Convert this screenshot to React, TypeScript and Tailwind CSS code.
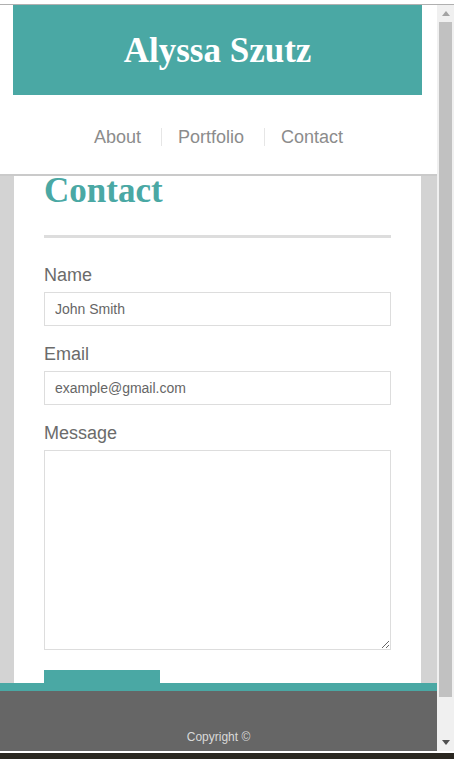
const sans = { fontFamily: '"Liberation Sans", Arial, sans-serif' };

const FIELDS = [
  { label: "Name", placeholder: "John Smith" },
  { label: "Email", placeholder: "example@gmail.com" },
];

const NAV = ["About", "Portfolio", "Contact"];

function Scrollbar() {
  return (
    <div className="flex w-[17px] flex-col bg-[#f0f0f0]">
      <div className="flex h-[17px] items-center justify-center">
        <svg width="8" height="5" viewBox="0 0 8 5">
          <path d="M0 5 L4 0 L8 5 Z" fill="#a3a3a3" />
        </svg>
      </div>
      <div className="mx-[2px] h-[675px] bg-[#c1c1c1]" />
      <div className="flex-1" />
      <div className="flex h-[17px] items-center justify-center">
        <svg width="8" height="5" viewBox="0 0 8 5">
          <path d="M0 0 L8 0 L4 5 Z" fill="#505050" />
        </svg>
      </div>
    </div>
  );
}

export default function App() {
  return (
    <div className="flex h-[759px] w-[454px] flex-col overflow-hidden bg-white" style={sans}>
      <div className="h-[4px] bg-white" />
      <div className="h-px bg-[#b0b0b0]" />

      <div className="flex h-[746px]">
        <div className="flex w-[437px] flex-col">
          {/* header */}
          <header className="h-[171px] border-b-2 border-[#cacaca] bg-white">
            <div className="ml-[13px] flex h-[90px] w-[409px] items-center justify-center bg-[#4aa8a4]">
              <h1
                className="text-[35px] font-bold leading-none text-white"
                style={{ fontFamily: '"Liberation Serif", Georgia, serif' }}
              >
                Alyssa Szutz
              </h1>
            </div>
            <nav className="flex h-[79px] items-start justify-center gap-1 pt-[33px]">
              {NAV.map((item, i) => (
                <a
                  key={item}
                  className={
                    "px-4 text-[18px] leading-[18px] text-[#8c8c8c] " +
                    (i > 0 ? "border-l border-[#e6e6e6]" : "")
                  }
                >
                  {item}
                </a>
              ))}
            </nav>
          </header>

          {/* page body */}
          <main className="flex-1 overflow-hidden bg-[#d3d3d3]">
            <div className="ml-[14px] w-[407px] bg-white px-[30px] pb-10">
              <h2
                className="text-[35px] font-bold leading-[30px] text-[#4aa8a4]"
                style={{ fontFamily: '"Liberation Serif", Georgia, serif' }}
              >
                Contact
              </h2>
              <div className="mt-[29px] h-[3px] bg-[#dddddd]" />

              <form className="mt-[26px] flex flex-col">
                {FIELDS.map((f) => (
                  <div key={f.label} className="mb-[17px] flex flex-col">
                    <label className="text-[18px] leading-[22px] text-[#6b6b6b]">{f.label}</label>
                    <input
                      className="mt-[6px] h-[34px] w-full border border-[#dddddd] px-[10px] text-[14px] outline-none placeholder:text-[#666]"
                      placeholder={f.placeholder}
                    />
                  </div>
                ))}
                <label className="text-[18px] leading-[22px] text-[#6b6b6b]">Message</label>
                <textarea className="mt-[6px] h-[200px] w-full border border-[#dddddd] px-[10px] py-2 text-[14px] outline-none" />
                <button type="button" className="mt-[20px] h-[40px] w-[116px] bg-[#4aa8a4]" />
              </form>
            </div>
          </main>

          {/* footer */}
          <footer className="h-[68px] border-t-8 border-[#4aa8a4] bg-[#666666] pt-[39px] text-center">
            <p className="text-[12px] leading-[14px] text-[#d9d9d9]">Copyright ©</p>
          </footer>
        </div>
        <Scrollbar />
      </div>

      <div className="h-[2px] bg-white" />
      <div className="flex-1 bg-[#2a2720]" />
    </div>
  );
}
